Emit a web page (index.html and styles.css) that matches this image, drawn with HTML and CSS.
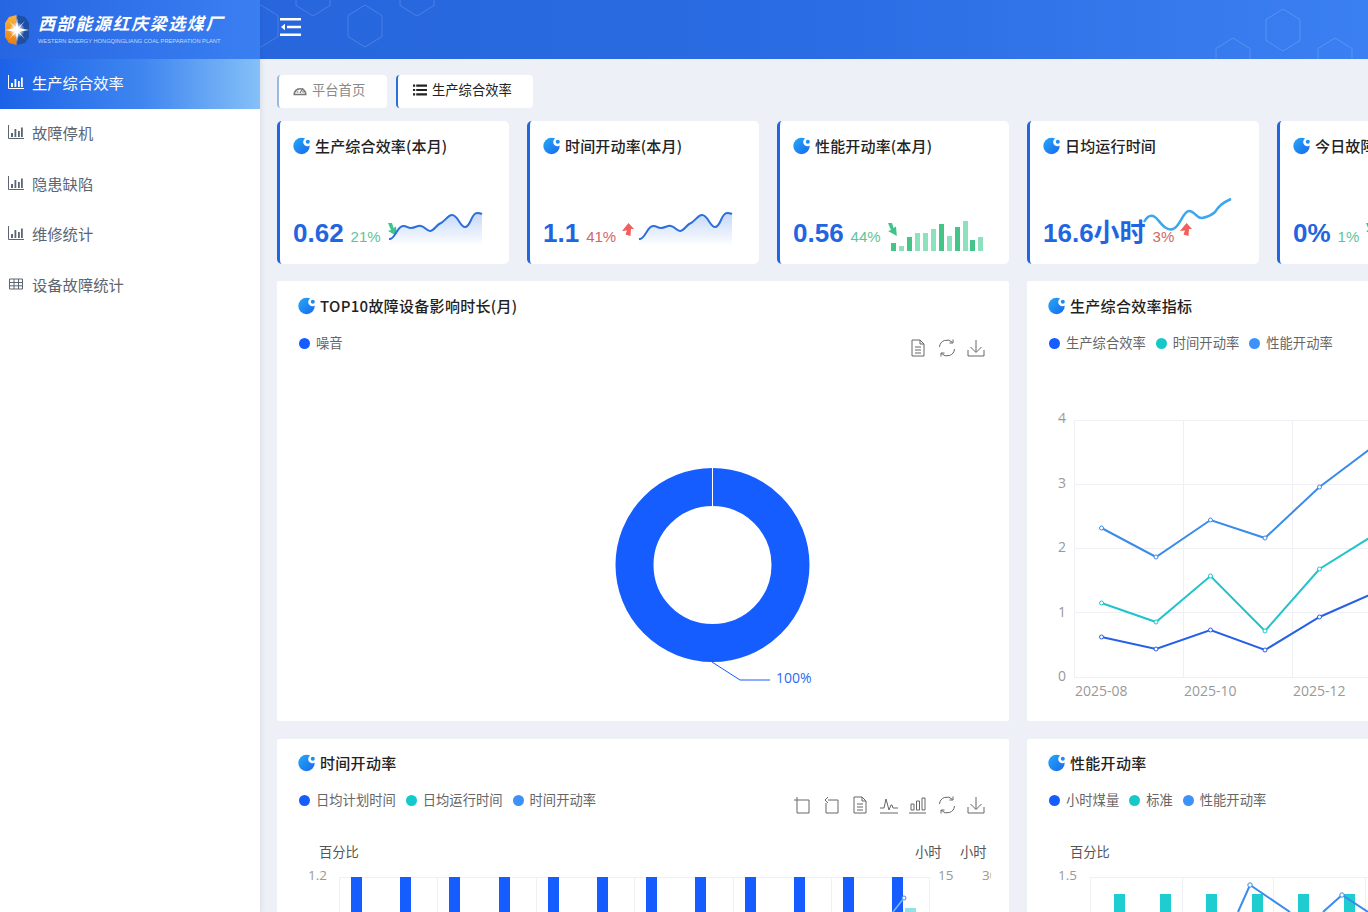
FILE: index.html
```html
<!DOCTYPE html>
<html lang="zh-CN">
<head>
<meta charset="utf-8">
<title>生产综合效率</title>
<link rel="stylesheet" href="styles.css">
</head>
<body>
<svg class="defs" width="0" height="0">
  <defs>
    <linearGradient id="tg" x1="0" y1="0" x2="1" y2="1"><stop offset="0" stop-color="#27a9f5"/><stop offset="1" stop-color="#1668f0"/></linearGradient>
    <linearGradient id="area" x1="0" y1="0" x2="0" y2="1"><stop offset="0" stop-color="#c4d8f8"/><stop offset="1" stop-color="#ffffff"/></linearGradient>
    <linearGradient id="org" x1="0" y1="0" x2="0" y2="1"><stop offset="0" stop-color="#f9b33c"/><stop offset="1" stop-color="#e97d14"/></linearGradient>
    <radialGradient id="glow"><stop offset="0" stop-color="#fff"/><stop offset=".45" stop-color="#fff" stop-opacity=".75"/><stop offset="1" stop-color="#fff" stop-opacity="0"/></radialGradient>
    <symbol id="ticon" viewBox="0 0 18 18">
      <circle cx="8.500" cy="9" r="8.200" fill="url(#tg)"/>
      <circle cx="14.500" cy="5" r="4.300" fill="#fff"/>
      <circle cx="14.800" cy="4.800" r="2" fill="#1f8cf2"/>
    </symbol>
    <symbol id="bars" viewBox="0 0 16 14">
      <path d="M.5 0v13.500H16" fill="none" stroke="currentColor"/>
      <path d="M3 8h2v4H3zM6.500 4h1.800v8H6.500zM10 6h1.800v6H10zM13 2.500h1.800V12H13z" fill="currentColor"/>
    </symbol>
    <symbol id="i-zoom" viewBox="0 0 18 18"><path d="M1 4h15v13H4V1M1 4" fill="none" stroke="currentColor"/></symbol>
    <symbol id="i-back" viewBox="0 0 18 18"><path d="M6 4h10v13H4V7M6 1L3 4l3 3" fill="none" stroke="currentColor"/></symbol>
    <symbol id="i-doc" viewBox="0 0 18 18"><path d="M3 1h8l4 4v12H3zM11 1v4h4M6 8h6M6 11h6M6 14h6" fill="none" stroke="currentColor"/></symbol>
    <symbol id="i-line" viewBox="0 0 18 18"><path d="M0 17h18M0 12h4l2-9 3 11 2-5h1l1 3h5" fill="none" stroke="currentColor"/></symbol>
    <symbol id="i-bar" viewBox="0 0 18 18"><path d="M0 17h17M2 8h3v6H2zM7.500 5h3v9h-3zM13 2h3v12h-3z" fill="none" stroke="currentColor"/></symbol>
    <symbol id="i-restore" viewBox="0 0 18 18"><path d="M1.500 8a7.500 7.500 0 0 1 13-4.500M16.500 10a7.500 7.500 0 0 1-13 4.500M15 .5v3.500h-3.500M3 17.500V14h3.500" fill="none" stroke="currentColor"/></symbol>
    <symbol id="i-save" viewBox="0 0 18 18"><path d="M1 11v6h16v-6M9 1v12M3.500 8L9 13.500 14.500 8" fill="none" stroke="currentColor"/></symbol>
    <symbol id="hex" viewBox="0 0 36 44"><path d="M18 1l17 10.500v21L18 43 1 32.500v-21z" fill="none" stroke="currentColor"/></symbol>
  </defs>
</svg>
<div class="app">
  <aside class="sidebar">
    <div class="brand">
      <svg class="logo" viewBox="0 0 26 32" width="26" height="32">
        <path d="M12.500 1L5 3 1 9v14l4 6 7.500 2z" fill="url(#org)"/>
        <path d="M13.500 1L21 3l4 6v14l-4 6-7.500 2z" fill="#1f4fa0"/>
        <circle cx="13" cy="16" r="8" fill="url(#glow)"/>
        <path d="M13 4l1.200 9.500L21 7l-6 7.200L25 16l-10 1.800 6 7.200-6.800-6.500L13 28l-1.200-9.500L5 25l6-7.200L1 16l10-1.800L5 7l6.800 6.500z" fill="#fff"/>
      </svg>
      <div class="brand-text">
        <div class="brand-cn">西部能源红庆梁选煤厂</div>
        <div class="brand-en">WESTERN ENERGY HONGQINGLIANG COAL PREPARATION PLANT</div>
      </div>
    </div>
    <nav class="menu">
      <div class="menu-item active"><svg class="menu-icon"><use href="#bars"/></svg>生产综合效率</div>
      <div class="menu-item"><svg class="menu-icon"><use href="#bars"/></svg>故障停机</div>
      <div class="menu-item"><svg class="menu-icon"><use href="#bars"/></svg>隐患缺陷</div>
      <div class="menu-item"><svg class="menu-icon"><use href="#bars"/></svg>维修统计</div>
      <div class="menu-item"><svg class="menu-icon" viewBox="0 0 16 14"><path d="M1.500 2h13v10h-13zM1.500 5.500h13M1.500 8.800h13M6 2v10M10.500 2v10" fill="none" stroke="currentColor"/></svg>设备故障统计</div>
    </nav>
  </aside>
  <main class="main">
    <header class="topbar">
      <svg class="hexes" viewBox="260 0 1108 59" width="1108" height="59">
        <use href="#hex" x="243" y="4" width="36" height="44"/>
        <use href="#hex" x="295" y="-27" width="36" height="44"/>
        <use href="#hex" x="347" y="4" width="36" height="44"/>
        <use href="#hex" x="399" y="-27" width="36" height="44"/>
        <use href="#hex" x="1265" y="8" width="36" height="44"/>
        <use href="#hex" x="1215" y="37" width="36" height="44"/>
        <use href="#hex" x="1317" y="37" width="36" height="44"/>
      </svg>
      <svg class="fold" viewBox="0 0 21 18" width="21" height="18">
        <path d="M0 0h21v2.400H0zM0 15.600h21V18H0zM7 7.800h14v2.400H7z" fill="#fff"/>
        <path d="M1 9l4-3.200v6.400z" fill="#fff"/>
      </svg>
    </header>
    <div class="content">
      <div class="tabs">
        <div class="tab tab-home">
          <svg class="tab-icon" viewBox="0 0 14 12"><path d="M1.200 10.500a5.800 5.800 0 1 1 11.600 0z" fill="none" stroke="#777" stroke-width="1.500"/><path d="M7 9l3-5M3.500 8h2M9 8h2M4 5l1.500 1" stroke="#777" stroke-width="1.200"/></svg>平台首页
        </div>
        <div class="tab tab-cur">
          <svg class="tab-icon" viewBox="0 0 13 10"><path d="M0 0h2v2H0zM3 0h10v2H3zM0 4h2v2H0zM3 4h10v2H3zM0 8h2v2H0zM3 8h10v2H3z" fill="#222"/></svg>生产综合效率
        </div>
      </div>

      <section class="cards">
        <article class="card">
          <h3 class="title"><svg class="title-icon"><use href="#ticon"/></svg>生产综合效率(本月)</h3>
          <div class="stat"><span class="value">0.62</span><span class="pct down">21%</span><svg class="arrow" viewBox="0 0 12 14"><path d="M1 0h4l1.500 5 2.500-1.500.8 9.500L1 8l3-1z" fill="#3cc48a"/></svg></div>
          <svg class="spark" viewBox="0 0 232 143">
            <path d="M112 118C118 119 120 105 126 105C131 105 130 107 134 107C138 107 141 104 144 105C148 106 150 110 153 110C157 110 160 103 164 102C168 100 171 94 175 94C181 94 183 106 188 106C194 106 194 92 200 92C202 92 203 92 205 93V125H112Z" fill="url(#area)"/>
            <path d="M112 118C118 119 120 105 126 105C131 105 130 107 134 107C138 107 141 104 144 105C148 106 150 110 153 110C157 110 160 103 164 102C168 100 171 94 175 94C181 94 183 106 188 106C194 106 194 92 200 92C202 92 203 92 205 93" fill="none" stroke="#2b6fdc" stroke-width="2"/>
          </svg>
        </article>
        <article class="card">
          <h3 class="title"><svg class="title-icon"><use href="#ticon"/></svg>时间开动率(本月)</h3>
          <div class="stat"><span class="value">1.1</span><span class="pct up">41%</span><svg class="arrow" viewBox="0 0 12 14"><path d="M6.500 0L12 6H9l-.5 7-5-1.500L5 7.500 0 8z" fill="#f25f5c"/></svg></div>
          <svg class="spark" viewBox="0 0 232 143">
            <path d="M112 118C118 119 120 105 126 105C131 105 130 107 134 107C138 107 141 104 144 105C148 106 150 110 153 110C157 110 160 103 164 102C168 100 171 94 175 94C181 94 183 106 188 106C194 106 194 92 200 92C202 92 203 92 205 93V125H112Z" fill="url(#area)"/>
            <path d="M112 118C118 119 120 105 126 105C131 105 130 107 134 107C138 107 141 104 144 105C148 106 150 110 153 110C157 110 160 103 164 102C168 100 171 94 175 94C181 94 183 106 188 106C194 106 194 92 200 92C202 92 203 92 205 93" fill="none" stroke="#2b6fdc" stroke-width="2"/>
          </svg>
        </article>
        <article class="card">
          <h3 class="title"><svg class="title-icon"><use href="#ticon"/></svg>性能开动率(本月)</h3>
          <div class="stat"><span class="value">0.56</span><span class="pct down">44%</span><svg class="arrow" viewBox="0 0 12 14"><path d="M1 0h4l1.500 5 2.500-1.500.8 9.500L1 8l3-1z" fill="#3cc48a"/></svg></div>
          <svg class="spark" viewBox="0 0 232 143">
            <g fill="#45c489">
              <rect x="114" y="122" width="5" height="8"/><rect x="130" y="116" width="5" height="14"/><rect x="162" y="103" width="5" height="27"/><rect x="178" y="106" width="5" height="24"/><rect x="193" y="119" width="5" height="11"/>
            </g>
            <g fill="#8de2bd">
              <rect x="122" y="125" width="5" height="5"/><rect x="138" y="112" width="5" height="18"/><rect x="146" y="112" width="5" height="18"/><rect x="154" y="108" width="5" height="22"/><rect x="170" y="115" width="5" height="15"/><rect x="186" y="100" width="5" height="30"/><rect x="201" y="116" width="5" height="14"/>
            </g>
          </svg>
        </article>
        <article class="card">
          <h3 class="title"><svg class="title-icon"><use href="#ticon"/></svg>日均运行时间</h3>
          <div class="stat"><span class="value">16.6小时</span><span class="pct up">3%</span><svg class="arrow" viewBox="0 0 12 14"><path d="M6.500 0L12 6H9l-.5 7-5-1.500L5 7.500 0 8z" fill="#f25f5c"/></svg></div>
          <svg class="spark" viewBox="0 0 232 143">
            <path d="M117 101C122 92 127 94 131 99C136 105 140 110 146 108C153 106 156 90 162 90C168 90 170 98 175 97C180 96 185 94 188 91C192 85 195 82 204 78" fill="none" stroke="#3ca6ef" stroke-width="2.500"/>
          </svg>
        </article>
        <article class="card">
          <h3 class="title"><svg class="title-icon"><use href="#ticon"/></svg>今日故障率</h3>
          <div class="stat"><span class="value">0%</span><span class="pct down">1%</span><svg class="arrow" viewBox="0 0 12 14"><path d="M1 0h4l1.500 5 2.500-1.500.8 9.500L1 8l3-1z" fill="#3cc48a"/></svg></div>
        </article>
      </section>

      <section class="panels">
        <article class="panel panel-tall">
          <h3 class="title panel-title"><svg class="title-icon"><use href="#ticon"/></svg>TOP10故障设备影响时长(月)</h3>
          <div class="panel-head">
            <ul class="legend"><li><i class="dot d-blue"></i>噪音</li></ul>
            <div class="tools">
              <svg class="tool"><use href="#i-doc"/></svg>
              <svg class="tool"><use href="#i-restore"/></svg>
              <svg class="tool"><use href="#i-save"/></svg>
            </div>
          </div>
          <svg class="chart chart-tall" viewBox="277 381 732 340">
            <circle cx="712.500" cy="565" r="78" fill="none" stroke="#165dff" stroke-width="38"/>
            <path d="M712.500 468v38" stroke="#fff"/>
            <path d="M712 662l28 18h30" fill="none" stroke="#165dff"/>
            <text class="t-blue" x="776" y="683">100%</text>
          </svg>
        </article>
        <article class="panel panel-tall">
          <h3 class="title panel-title"><svg class="title-icon"><use href="#ticon"/></svg>生产综合效率指标</h3>
          <div class="panel-head">
            <ul class="legend"><li><i class="dot d-blue"></i>生产综合效率</li><li><i class="dot d-teal"></i>时间开动率</li><li><i class="dot d-sky"></i>性能开动率</li></ul>
          </div>
          <svg class="chart chart-tall" viewBox="1027 381 732 340">
            <g stroke="#eef0f3" fill="none">
              <path d="M1074 420.500H1760M1074 484.500H1760M1074 548.500H1760M1074 612.500H1760M1074 677.500H1760"/>
              <path d="M1074.500 420V677M1183.500 420V677M1292.500 420V677M1401.500 420V677"/>
            </g>
            <g class="t-axis">
              <text x="1058" y="423">4</text><text x="1058" y="488">3</text><text x="1058" y="552">2</text><text x="1058" y="617">1</text><text x="1058" y="681">0</text>
              <text x="1075" y="696">2025-08</text><text x="1184" y="696">2025-10</text><text x="1293" y="696">2025-12</text>
            </g>
            <g fill="none" stroke-width="2">
              <path d="M1101.500 528L1156 557L1210.500 520L1265 538L1319.500 487L1374 446" stroke="#3b8beb"/>
              <path d="M1101.500 603L1156 622L1210.500 576L1265 631L1319.500 569L1374 535" stroke="#22c3cf"/>
              <path d="M1101.500 637L1156 649L1210.500 630L1265 650L1319.500 617L1374 593" stroke="#2560e6"/>
            </g>
            <g fill="#fff" stroke-width="1">
              <g stroke="#3b8beb"><circle cx="1101.500" cy="528" r="2"/><circle cx="1156" cy="557" r="2"/><circle cx="1210.500" cy="520" r="2"/><circle cx="1265" cy="538" r="2"/><circle cx="1319.500" cy="487" r="2"/></g>
              <g stroke="#22c3cf"><circle cx="1101.500" cy="603" r="2"/><circle cx="1156" cy="622" r="2"/><circle cx="1210.500" cy="576" r="2"/><circle cx="1265" cy="631" r="2"/><circle cx="1319.500" cy="569" r="2"/></g>
              <g stroke="#2560e6"><circle cx="1101.500" cy="637" r="2"/><circle cx="1156" cy="649" r="2"/><circle cx="1210.500" cy="630" r="2"/><circle cx="1265" cy="650" r="2"/><circle cx="1319.500" cy="617" r="2"/></g>
            </g>
          </svg>
        </article>
        <article class="panel">
          <h3 class="title panel-title"><svg class="title-icon"><use href="#ticon"/></svg>时间开动率</h3>
          <div class="panel-head">
            <ul class="legend"><li><i class="dot d-blue"></i>日均计划时间</li><li><i class="dot d-teal"></i>日均运行时间</li><li><i class="dot d-sky"></i>时间开动率</li></ul>
            <div class="tools">
              <svg class="tool"><use href="#i-zoom"/></svg>
              <svg class="tool"><use href="#i-back"/></svg>
              <svg class="tool"><use href="#i-doc"/></svg>
              <svg class="tool"><use href="#i-line"/></svg>
              <svg class="tool"><use href="#i-bar"/></svg>
              <svg class="tool"><use href="#i-restore"/></svg>
              <svg class="tool"><use href="#i-save"/></svg>
            </div>
          </div>
          <svg class="chart chart-left" viewBox="277 838 714 80">
            <text class="t-name" x="319" y="857">百分比</text>
            <text class="t-name" x="915" y="857">小时</text>
            <text class="t-name" x="960" y="857">小时</text>
            <g class="t-axis t-small"><text x="308" y="880">1.2</text><text x="938" y="880">15</text><text x="982" y="880">30</text></g>
            <g stroke="#eef0f3" fill="none"><path d="M339 877.500H929M339.500 877V918M437.500 877V918M536.500 877V918M634.500 877V918M733.500 877V918M831.500 877V918M929.500 877V918"/></g>
            <g fill="#165dff">
              <rect x="351" y="877" width="11" height="40"/><rect x="400" y="877" width="11" height="40"/><rect x="449" y="877" width="11" height="40"/><rect x="499" y="877" width="11" height="40"/><rect x="548" y="877" width="11" height="40"/><rect x="597" y="877" width="11" height="40"/><rect x="646" y="877" width="11" height="40"/><rect x="695" y="877" width="11" height="40"/><rect x="745" y="877" width="11" height="40"/><rect x="794" y="877" width="11" height="40"/><rect x="843" y="877" width="11" height="40"/><rect x="892" y="877" width="11" height="40"/>
            </g>
            <rect x="905" y="908" width="11" height="10" fill="#8fe3e6"/>
            <path d="M904 898L893 912" stroke="#7fb8f5" stroke-width="1.500"/>
            <circle cx="904" cy="898" r="2" fill="#fff" stroke="#3b8beb"/>
          </svg>
        </article>
        <article class="panel">
          <h3 class="title panel-title"><svg class="title-icon"><use href="#ticon"/></svg>性能开动率</h3>
          <div class="panel-head">
            <ul class="legend"><li><i class="dot d-blue"></i>小时煤量</li><li><i class="dot d-teal"></i>标准</li><li><i class="dot d-sky"></i>性能开动率</li></ul>
          </div>
          <svg class="chart chart-right" viewBox="1027 838 732 80">
            <text class="t-name" x="1070" y="857">百分比</text>
            <g class="t-axis t-small"><text x="1058" y="880">1.5</text></g>
            <g stroke="#eef0f3" fill="none"><path d="M1090 877.500H1760M1090.500 877V918M1182.500 877V918M1273.500 877V918M1365.500 877V918"/></g>
            <g fill="#1fcdd0">
              <rect x="1114" y="894" width="11" height="24"/><rect x="1160" y="894" width="11" height="24"/><rect x="1206" y="894" width="11" height="24"/><rect x="1252" y="894" width="11" height="24"/><rect x="1298" y="894" width="11" height="24"/><rect x="1344" y="894" width="11" height="24"/>
            </g>
            <path d="M1238 912L1250 885L1290 912M1323 912L1342 895L1368 912" fill="none" stroke="#3b8beb" stroke-width="2"/>
            <g fill="#fff" stroke="#3b8beb"><circle cx="1250" cy="885" r="2.200"/><circle cx="1342" cy="895" r="2.200"/></g>
          </svg>
        </article>
      </section>
    </div>
  </main>
</div>
</body>
</html>
```

FILE: styles.css
```css
* { box-sizing: border-box; }
html, body { margin: 0; height: 100%; overflow: hidden; }
body {
  font-family: "Noto Sans CJK SC", "Liberation Sans", sans-serif;
  background: #edf0f6;
  color: #222;
}
.defs { position: absolute; }
.app { display: flex; height: 912px; width: 1368px; }

/* sidebar */
.sidebar {
  flex: 0 0 260px;
  background: #fff;
  box-shadow: 2px 0 4px rgba(40, 60, 100, .08);
  position: relative;
  z-index: 2;
}
.brand {
  height: 59px;
  display: flex;
  align-items: center;
  padding-left: 4px;
  gap: 8px;
  background: linear-gradient(90deg, #2766e2 0%, #3a7ff2 100%);
}
.logo { flex: none; margin-top: 1px; }
.brand-text { color: #fff; margin-top: -1px; }
.brand-cn {
  font-size: 17px;
  font-weight: 700;
  font-style: italic;
  letter-spacing: 1.6px;
  line-height: 22px;
}
.brand-en {
  font-family: "Liberation Sans", sans-serif;
  font-size: 5.7px;
  line-height: 9px;
  margin-top: 3px;
  color: rgba(255, 255, 255, .72);
  white-space: nowrap;
}
.menu-item {
  height: 50.6px;
  display: flex;
  align-items: center;
  font-size: 15.3px;
  color: #5c6672;
  padding: 0 0 4px 8px;
}
.menu-item.active {
  height: 50px;
  padding-bottom: 5px;
  color: #fff;
  background: linear-gradient(90deg, #1c62e8 0%, #3f86f0 55%, #85c0f8 100%);
}
.menu-icon { width: 16px; height: 14px; margin-right: 8px; flex: none; }

/* top bar */
.main { flex: 1; min-width: 0; overflow: hidden; }
.topbar {
  height: 59px;
  position: relative;
  overflow: hidden;
  display: flex;
  align-items: center;
  padding-left: 20px;
  background: linear-gradient(90deg, #2766dd 0%, #2a6ce3 50%, #3b80f2 100%);
}
.hexes { position: absolute; left: 0; top: 0; color: rgba(255, 255, 255, .16); }
.fold { position: relative; margin-top: -5px; }

/* content */
.content { padding: 16px 0 0 17px; width: 1500px; }
.tabs { display: flex; gap: 9px; height: 33px; }
.tab {
  display: flex;
  align-items: center;
  background: #fff;
  border-radius: 4px;
  font-size: 13.3px;
  border-left: 2px solid #9cb9dc;
  color: #8a8a8a;
  padding: 0 0 4px 14px;
}
.tab-home { width: 110px; }
.tab-cur { width: 137px; color: #222; border-left-color: #2b6fdc; padding-left: 15px; }
.tab-icon { width: 14px; height: 12px; margin-right: 5px; flex: none; }

/* cards */
.cards { display: flex; gap: 18px; margin-top: 13px; }
.card {
  flex: 0 0 232px;
  height: 143px;
  position: relative;
  background: #fff;
  border-radius: 5px;
  border-left: 3px solid #1f66e0;
  padding: 15px 0 0 13px;
}
.title {
  margin: 0;
  display: flex;
  align-items: center;
  font-size: 15px;
  font-weight: 500;
  line-height: 20px;
  letter-spacing: .17px;
  color: #222;
  white-space: nowrap;
}
.title-icon { width: 18px; height: 18px; margin-right: 4px; flex: none; }
.stat { display: flex; align-items: baseline; position: absolute; left: 13px; top: 94px; white-space: nowrap; }
.value {
  font-family: "Liberation Sans", "Noto Sans CJK SC", sans-serif;
  font-size: 26px;
  font-weight: 700;
  color: #1f66e0;
  line-height: 36px;
}
.pct { font-family: "Liberation Sans", sans-serif; font-size: 15px; margin-left: 7px; }
.pct.down { color: #5fc49a; }
.pct.up { color: #d26666; }
.arrow { width: 12px; height: 14px; margin-left: 6px; align-self: flex-start; margin-top: 8px; }
.spark { position: absolute; left: -3px; top: 0; width: 232px; height: 143px; pointer-events: none; }

/* panels */
.panels { display: grid; grid-template-columns: 732px 732px; gap: 18px; margin-top: 17px; }
.panel { background: #fff; border-radius: 2px; height: 240px; overflow: hidden; }
.panel-tall { height: 440px; }
.panel-title { padding: 14px 0 0 21px; height: 34px; letter-spacing: .3px; }
.panel-head {
  display: flex;
  justify-content: space-between;
  align-items: flex-start;
  padding: 0 24px 0 22px;
  height: 51px;
}
.panel-tall .panel-title { padding-top: 15px; height: 35px; }
.panel-tall .panel-head { height: 65px; }
.legend { list-style: none; margin: 17px 0 0; padding: 0; display: flex; gap: 10px; font-size: 13.3px; line-height: 20px; color: #666; }
.legend li { display: flex; align-items: center; }
.dot { width: 11px; height: 11px; border-radius: 50%; margin-right: 6px; flex: none; }
.d-blue { background: #165dff; }
.d-teal { background: #14c9c9; }
.d-sky { background: #3c92f7; }
.tools { display: flex; gap: 11px; margin-top: 23px; color: #666; }
.tool { width: 18px; height: 18px; display: block; }
.chart { display: block; }
.chart-tall { width: 732px; height: 340px; }
.chart-left { width: 714px; height: 80px; margin-top: 14px; }
.chart-right { width: 732px; height: 80px; margin-top: 14px; }

.t-axis text { font-family: "Open Sans", sans-serif; font-size: 14px; fill: #999; }
.t-small text { font-size: 13.5px; }
.t-name { font-family: "Noto Sans CJK SC", sans-serif; font-size: 13.3px; fill: #555; }
.t-blue { font-family: "Open Sans", sans-serif; font-size: 14px; fill: #2a6bf0; }
```
